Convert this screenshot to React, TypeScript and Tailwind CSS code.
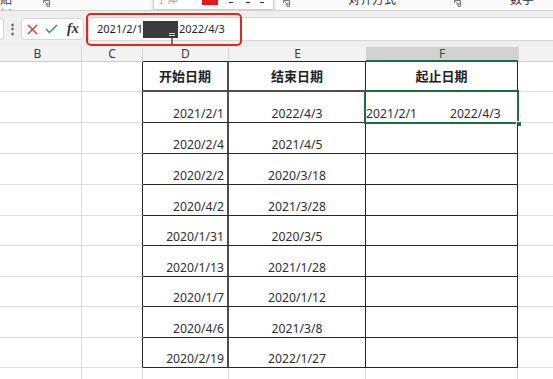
import React from "react";

const rows = [
  { h: "h-[31px]", d: "2021/2/1", e: "2022/4/3", f: true },
  { h: "h-[31px]", d: "2020/2/4", e: "2021/4/5" },
  { h: "h-[31px]", d: "2020/2/2", e: "2020/3/18" },
  { h: "h-[31px]", d: "2020/4/2", e: "2021/3/28" },
  { h: "h-[30px]", d: "2020/1/31", e: "2020/3/5" },
  { h: "h-[31px]", d: "2020/1/13", e: "2021/1/28" },
  { h: "h-[30px]", d: "2020/1/7", e: "2020/1/12" },
  { h: "h-[31px]", d: "2020/4/6", e: "2021/3/8" },
  { h: "h-[30px]", d: "2020/2/19", e: "2022/1/27" },
];

function Launcher() {
  return (
    <svg width="7" height="7" viewBox="0 0 7 7" className="shrink-0">
      <path d="M0.5 3V0.5H6.5V6.5H4" fill="none" stroke="#777" strokeWidth="1" />
      <path d="M1.5 1.5L5 5M5 2.5V5H2.5" fill="none" stroke="#777" strokeWidth="1" />
    </svg>
  );
}

export default function App() {
  return (
    <div className="w-[553px] h-[379px] overflow-hidden bg-white font-[family-name:'Noto_Sans','Noto_Sans_CJK_SC',sans-serif] text-[#2e2e2e]">
      {/* Ribbon remnant */}
      <div className="relative h-[11px] bg-[#fafafa] border-b border-[#d2d2d2] shadow-[0_1px_2px_rgba(0,0,0,0.12)] overflow-hidden">
        <div className="flex items-start -mt-[8px] text-[12px] leading-[16px] text-[#333]">
          <span className="w-[22px] shrink-0">贴板</span>
          <div className="ml-[21px] mt-[8px]"><Launcher /></div>
          <div className="w-[233px] shrink-0" />
          <div className="mt-[8px]"><Launcher /></div>
          <span className="ml-[58px]">对齐方式</span>
          <div className="ml-[58px] mt-[8px]"><Launcher /></div>
          <span className="ml-[49px]">数字</span>
        </div>
        {/* floating mini toolbar */}
        <div className="absolute left-[153px] top-[-4px] w-[121px] h-[14px] bg-white border border-[#cfcfcf] shadow-[0_1px_3px_rgba(0,0,0,0.2)] flex items-start">
          <span className="ml-[2px] -mt-[5px] text-[11px] leading-[14px] text-[#9a9a9a]">字体</span>
          <div className="ml-[24px] mt-[3px] w-[16px] h-[5px] bg-[#e3191b]" />
          <div className="ml-[11px] mt-[5px] w-[4px] h-[1px] bg-[#333]" />
          <div className="ml-[13px] mt-[5px] w-[4px] h-[1px] bg-[#333]" />
          <div className="ml-[10px] mt-[5px] w-[4px] h-[1px] bg-[#333]" />
        </div>
      </div>

      {/* Formula bar */}
      <div className="relative h-[36px] bg-[#efefef] flex items-start">
        <div className="w-[4px] h-[22px] mt-[7px] bg-white border border-l-0 border-[#d4d4d4] rounded-r-[3px]" />
        <div className="w-[17px] mt-[9px] text-center text-[13px] leading-[16px] font-bold text-[#555]">⋮</div>
        <div className="w-[63px] h-[22px] mt-[7px] bg-white border border-[#d6d6d6] rounded-[4px] flex items-center">
          <svg width="11" height="11" viewBox="0 0 11 11" className="ml-[5px]">
            <path d="M1 1L10 10M10 1L1 10" stroke="#d23b3b" strokeWidth="1.4" fill="none" />
          </svg>
          <svg width="13" height="10" viewBox="0 0 13 10" className="ml-[7px]">
            <path d="M1 5L4.5 8.5L12 1" stroke="#3f8f4f" strokeWidth="1.4" fill="none" />
          </svg>
          <span className="ml-[9px] font-['Liberation_Serif',serif] italic font-bold text-[14px] leading-[16px] text-[#333]">fx</span>
        </div>
        <div className="relative ml-[4px] flex-1 h-[24px] mt-[6px] bg-white border border-r-0 border-[#d6d6d6] rounded-l-[3px] flex items-center text-[11px] leading-[14px] text-[#1f1f1f]">
          <span className="ml-[8px]">2021/2/1</span>
          <div className="w-[35px] h-[17px] bg-[#3a3a3a] shrink-0" />
          <span className="ml-[1px]">2022/4/3</span>
          <svg width="8" height="13" viewBox="0 0 8 13" className="absolute left-[79px] top-[15px]">
            <path d="M1 0.5H7M1 2.5H7" stroke="#d8d8d8" strokeWidth="1" />
            <path d="M4 3V12M1.5 12.5H6.5" stroke="#222" strokeWidth="1.2" />
          </svg>
        </div>
        <div className="absolute left-[86px] top-[2px] w-[156px] h-[33px] border-2 border-[#e8221c] rounded-[5px]" />
      </div>

      {/* Column headers */}
      <div className="flex h-[15px] bg-[#f3f3f3] text-[12px] leading-[14px] text-[#3b3b3b]">
        <div className="w-[82px] border-r border-r-[#d6d6d6] border-b border-b-[#cdcdcd] text-center pr-[6px]">B</div>
        <div className="w-[61px] border-r border-r-[#d6d6d6] border-b border-b-[#cdcdcd] text-center">C</div>
        <div className="w-[86px] border-r border-r-[#d6d6d6] border-b border-b-[#262626] text-center">D</div>
        <div className="w-[137px] border-b border-b-[#262626] text-center">E</div>
        <div className="w-[152px] bg-[#d2d2d2] border-b-2 border-b-[#1f6b3c] text-center text-[#1f5a35]">F</div>
        <div className="flex-1 border-l border-l-[#d6d6d6] border-b border-b-[#cdcdcd]" />
      </div>

      {/* Header row */}
      <div className="flex h-[30px]">
        <div className="w-[82px] border-r border-b border-[#dcdcdc]" />
        <div className="w-[61px] border-r border-r-[#262626] border-b border-b-[#dcdcdc]" />
        <div className="w-[86px] border-r-2 border-r-[#4d4d4d] border-b-2 border-b-[#4d4d4d] flex items-center justify-center text-[13px] font-bold leading-[16px] text-[#222]">开始日期</div>
        <div className="w-[137px] border-r border-r-[#262626] border-b-2 border-b-[#4d4d4d] flex items-center justify-center text-[13px] font-bold leading-[16px] text-[#222]">结束日期</div>
        <div className="w-[152px] border-r border-r-[#262626] border-b-2 border-b-[#4d4d4d] flex items-center justify-center text-[13px] font-bold leading-[16px] text-[#222]">起止日期</div>
        <div className="flex-1 border-b border-[#dcdcdc]" />
      </div>

      {/* Data rows */}
      {rows.map((r, i) => (
        <div key={i} className={`flex ${r.h} text-[12.2px] leading-[16px]`}>
          <div className="w-[82px] border-r border-b border-[#dcdcdc]" />
          <div className="w-[61px] border-r border-r-[#262626] border-b border-b-[#dcdcdc]" />
          <div className="w-[86px] border-r-2 border-r-[#4d4d4d] border-b border-b-[#262626] flex items-end justify-end pr-[3px]">{r.d}</div>
          <div className="w-[137px] border-r border-r-[#262626] border-b border-b-[#262626] flex items-end justify-center">{r.e}</div>
          <div className="relative w-[152px] border-r border-b border-[#262626] flex items-end">
            {r.f && (
              <>
                <span>2021/2/1</span>
                <span className="ml-[33px]">2022/4/3</span>
                <div className="absolute left-[-2px] top-[-2px] right-[-2px] bottom-[-2px] border-2 border-[#1f6b3c]" />
                <div className="absolute right-[-5px] bottom-[-5px] w-[6px] h-[6px] bg-[#1f6b3c] border border-white" />
              </>
            )}
          </div>
          <div className="flex-1 border-b border-[#dcdcdc]" />
        </div>
      ))}

      {/* Trailing row */}
      <div className="flex h-[31px]">
        <div className="w-[82px] border-r border-b border-[#dcdcdc]" />
        <div className="w-[61px] border-r border-b border-[#dcdcdc]" />
        <div className="w-[86px] border-r border-b border-[#dcdcdc]" />
        <div className="w-[137px] border-r border-b border-[#dcdcdc]" />
        <div className="w-[152px] border-r border-b border-[#dcdcdc]" />
        <div className="flex-1 border-b border-[#dcdcdc]" />
      </div>
    </div>
  );
}
